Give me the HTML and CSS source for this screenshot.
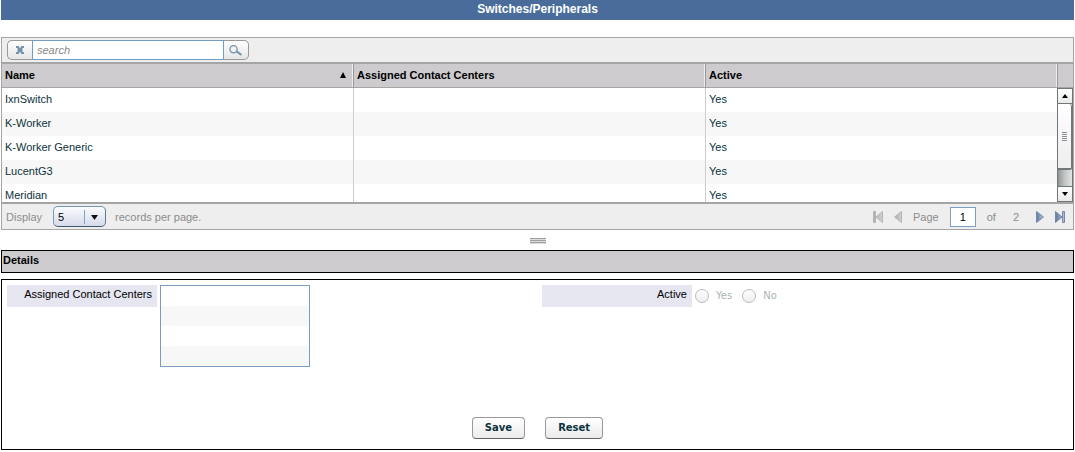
FILE: index.html
```html
<!DOCTYPE html>
<html lang="en">
<head>
<meta charset="utf-8">
<title>Switches/Peripherals</title>
<link rel="stylesheet" href="styles.css">
</head>
<body>
<h1 class="title">Switches/Peripherals</h1>

<section class="panel">
  <form class="search">
    <button class="search-clear" type="button" aria-label="Clear search">
      <svg width="8" height="8" viewBox="0 0 8 8"><path d="M0 0h3v1.500h2V0h3v2H6.500v4H8v2H5V6.500H3V8H0V6h1.500V2H0z" fill="#7593aa"/></svg>
    </button>
    <input class="search-input" type="text" placeholder="search" aria-label="Search">
    <button class="search-go" type="button" aria-label="Search">
      <svg width="14" height="11" viewBox="0 0 14 11" fill="none" stroke="#7593aa"><circle cx="4.500" cy="4.200" r="3.600" stroke-width="1.300"/><path d="M7.500 6.400l5 3.600" stroke-width="2"/></svg>
    </button>
  </form>

  <div class="grid">
    <table class="records">
      <thead>
        <tr>
          <th><span class="sortable">Name <svg width="6" height="6" viewBox="0 0 6 6"><path d="M3 0l3 6H0z"/></svg></span></th>
          <th>Assigned Contact Centers</th>
          <th>Active</th>
          <th class="corner"></th>
        </tr>
      </thead>
      <tbody>
        <tr><td>IxnSwitch</td><td></td><td>Yes</td><td class="corner"></td></tr>
        <tr><td>K-Worker</td><td></td><td>Yes</td><td class="corner"></td></tr>
        <tr><td>K-Worker Generic</td><td></td><td>Yes</td><td class="corner"></td></tr>
        <tr><td>LucentG3</td><td></td><td>Yes</td><td class="corner"></td></tr>
        <tr><td>Meridian</td><td></td><td>Yes</td><td class="corner"></td></tr>
      </tbody>
    </table>
    <div class="scrollbar">
      <button class="arrow" type="button" aria-label="Scroll up"><svg width="6" height="4" viewBox="0 0 6 4"><path d="M3 0l3 4H0z"/></svg></button>
      <div class="track">
        <div class="thumb"><svg width="5" height="9" viewBox="0 0 5 9"><path d="M0 .5h5M0 2.500h5M0 4.500h5M0 6.500h5M0 8.500h5" stroke="#8d8f8f"/></svg></div>
      </div>
      <button class="arrow" type="button" aria-label="Scroll down"><svg width="6" height="4" viewBox="0 0 6 4"><path d="M0 0h6L3 4z"/></svg></button>
    </div>
  </div>

  <div class="pager">
    <label for="size">Display</label>
    <span class="size">
      <select id="size"><option>5</option><option>10</option><option>25</option></select>
      <svg class="size-mark" width="16" height="14" viewBox="0 0 16 14"><path d="M.5 0v14" stroke="#7aa3c6"/><path d="M7 5h7l-3.500 5z" fill="#111"/></svg>
    </span>
    <span>records per page.</span>
    <div class="pages">
      <button class="nav" type="button" aria-label="First page" disabled>
        <svg width="10" height="12" viewBox="0 0 10 12"><defs><linearGradient id="off"><stop offset="0" stop-color="#aaa"/><stop offset="1" stop-color="#d2d2d2"/></linearGradient></defs><path d="M.5.5h2v11h-2zM9.500.5v11L3 6z" fill="url(#off)" stroke="#b5b5b5"/></svg>
      </button>
      <button class="nav" type="button" aria-label="Previous page" disabled>
        <svg width="8" height="12" viewBox="0 0 8 12"><path d="M7.500.5v11L.5 6z" fill="url(#off)" stroke="#b5b5b5"/></svg>
      </button>
      <label for="page">Page</label>
      <input class="page-input" id="page" type="text" value="1">
      <span class="of">of</span>
      <span class="total">2</span>
      <button class="nav" type="button" aria-label="Next page">
        <svg width="8" height="12" viewBox="0 0 8 12"><defs><linearGradient id="on"><stop offset="0" stop-color="#637b9f"/><stop offset="1" stop-color="#b9c4d6"/></linearGradient></defs><path d="M.5.5v11L7.500 6z" fill="url(#on)" stroke="#7388a8"/></svg>
      </button>
      <button class="nav" type="button" aria-label="Last page">
        <svg width="10" height="12" viewBox="0 0 10 12"><path d="M.5.5v11L7 6zM7.500.5h2v11h-2z" fill="url(#on)" stroke="#7388a8"/></svg>
      </button>
    </div>
  </div>
</section>

<div class="splitter"><svg width="16" height="6" viewBox="0 0 16 6"><path d="M0 .5h16M0 2.500h16M0 4.500h16" stroke="#a0a0a0"/><path d="M0 1.500h16M0 3.500h16M0 5.500h16" stroke="#dcdcdc"/></svg></div>

<h2 class="details-title">Details</h2>

<form class="details">
  <div class="fields">
    <div class="field">
      <label class="name" for="centers">Assigned Contact Centers</label>
      <select class="centers" id="centers" size="4"></select>
    </div>
    <div class="field">
      <span class="name" id="active">Active</span>
      <div class="choices" role="radiogroup" aria-labelledby="active">
        <label class="choice"><input type="radio" name="active" disabled>Yes</label>
        <label class="choice"><input type="radio" name="active" disabled>No</label>
      </div>
    </div>
  </div>
  <div class="actions">
    <button class="action" type="button">Save</button>
    <button class="action" type="button">Reset</button>
  </div>
</form>
</body>
</html>
```

FILE: styles.css
```css
* {
  box-sizing: border-box;
}

body {
  margin: 0 1px;
  background: #fff;
  color: #000;
  font: 11px/14px "Liberation Sans", Arial, sans-serif;
}

svg {
  display: block;
}

button,
input,
select {
  margin: 0;
  font: inherit;
}

.title {
  margin: 0 0 17px;
  padding-bottom: 2px;
  background: #4a6c9b;
  color: #fff;
  font-size: 12px;
  line-height: 18px;
  text-align: center;
}

.panel {
  border: 1px solid #a5a5a5;
  background: #eee;
}

/* Search bar */
.search {
  display: flex;
  height: 24px;
  padding: 2px 5px;
}

.search-clear,
.search-go {
  display: flex;
  align-items: center;
  justify-content: center;
  width: 25px;
  padding: 0;
  border: 1px solid #999;
  background: linear-gradient(#fff, #e6e6e8);
}

.search-clear {
  border-right: 0;
  border-radius: 5px 0 0 5px;
}

.search-go {
  border-left: 0;
  border-radius: 0 5px 5px 0;
}

.search-input {
  width: 192px;
  padding: 0 4px;
  border: 1px solid #6f9dc4;
  background: #fff;
}

.search-input::placeholder {
  color: #888;
  font-style: italic;
  opacity: 1;
}

/* Record list */
.grid {
  position: relative;
  height: 142px;
  overflow: hidden;
  border-top: 2px solid #a5a5a5;
  border-bottom: 2px solid #a5a5a5;
  background: #fff;
}

.records {
  width: 100%;
  border-spacing: 0;
  table-layout: fixed;
}

th,
td {
  height: 24px;
  padding: 0 3px 2px;
  border-right: 1px solid #ccc;
  text-align: left;
}

th {
  padding-bottom: 1px;
  border-right-color: #999;
  border-bottom: 1px solid #a5a5a5;
  background: #cdcbce;
  box-shadow: inset -1px 0 #eee;
}

td {
  color: #0b333c;
}

tbody tr:nth-child(even) {
  background: #f7f7f7;
}

.corner {
  width: 15px;
  padding: 0;
  border-right: 0;
  box-shadow: none;
}

.sortable {
  display: flex;
  align-items: center;
  justify-content: space-between;
  padding-right: 4px;
}

.scrollbar {
  position: absolute;
  top: 24px;
  right: 0;
  bottom: 0;
  display: flex;
  flex-direction: column;
  width: 16px;
  border: 1px solid #6f7777;
  border-width: 0 1px;
}

.arrow {
  display: flex;
  align-items: center;
  justify-content: center;
  flex: none;
  height: 16px;
  padding: 0;
  border: 1px solid #6f7777;
  border-width: 1px 0;
  background: linear-gradient(#fff, #e9e9ea);
}

.track {
  flex: 1;
  background: linear-gradient(90deg, #8f9494, #c4c7c7 50%, #e2e4e4);
}

.thumb {
  display: flex;
  align-items: center;
  justify-content: center;
  height: 81%;
  border-right: 1px solid #6f7777;
  border-bottom: 2px solid #6f7777;
  border-radius: 0 3px 2px 0;
  background: linear-gradient(#fff, #fbf8fb 30%, #eee);
}

/* Pager */
.pager {
  display: flex;
  align-items: center;
  height: 25px;
  padding: 0 8px 0 4px;
  color: #8c8c8c;
}

.size {
  position: relative;
  margin: 0 9px 0 11px;
}

.size select {
  display: block;
  width: 53px;
  height: 21px;
  padding: 0 4px;
  border: 1px solid #7497b5;
  border-right-color: #5c7b96;
  border-bottom-color: #40586e;
  border-radius: 5px;
  appearance: none;
  background: linear-gradient(#fbfcff, #d6dbeb);
  color: #000;
}

.size-mark {
  position: absolute;
  top: 4px;
  right: 6px;
  pointer-events: none;
}

.pages {
  display: flex;
  align-items: center;
  gap: 11px;
  margin-left: auto;
}

.nav {
  padding: 0;
  border: 0;
  background: none;
}

.page-input {
  width: 26px;
  height: 20px;
  padding: 0;
  border: 1px solid #7a9fc2;
  background: #fff;
  text-align: center;
}

.total {
  padding: 0 6px;
}

.splitter {
  display: flex;
  justify-content: center;
  padding: 8px 0 6px;
}

/* Details form */
.details-title {
  margin: 0 0 6px;
  padding: 2px 1px 5px;
  border: 1px solid #000;
  background: #cdcbce;
  font-size: 11px;
}

.details {
  padding: 5px 0 10px 5px;
  border: 1px solid #000;
}

.fields {
  display: grid;
  grid-template-columns: 1fr 1fr;
  gap: 4px;
}

.field {
  display: flex;
  align-items: flex-start;
  gap: 3px;
}

.name {
  width: 150px;
  padding: 2px 5px 6px;
  background: #e6e6f0;
  text-align: right;
}

.centers {
  width: 150px;
  height: 82px;
  padding: 0;
  border: 1px solid #7a9dc0;
  border-radius: 0;
  background: repeating-linear-gradient(#fff 0 20px, #f7f7f7 20px 40px);
}

.choices {
  display: flex;
  gap: 10px;
  padding-top: 4px;
}

.choice {
  display: flex;
  align-items: center;
  gap: 7px;
  color: #aab3b3;
  font-family: "DejaVu Sans", Verdana, sans-serif;
  font-size: 10px;
}

.choice input {
  width: 14px;
  height: 14px;
  border: 1px solid #bbb;
  border-radius: 50%;
  appearance: none;
  background: linear-gradient(#fff, #eee);
}

.actions {
  display: flex;
  justify-content: center;
  gap: 20px;
  margin-top: 50px;
  padding-right: 5px;
}

.action {
  height: 22px;
  padding: 0 12px;
  border: 1px solid #999;
  border-bottom-color: #5f6666;
  border-radius: 4px;
  background: linear-gradient(#fff, #ebebec);
  color: #0b333c;
  font-family: "DejaVu Sans", Verdana, sans-serif;
  font-size: 10px;
  font-weight: bold;
}
```
